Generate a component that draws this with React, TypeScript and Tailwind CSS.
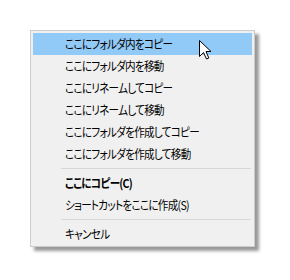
import React from "react";

const font = {
  fontFamily: '"Noto Sans CJK JP", sans-serif',
};

function Item({ label, active, bold }: { label: string; active?: boolean; bold?: boolean }) {
  return (
    <div
      className={
        "h-[22px] flex items-center pl-[32px] text-[12px] text-black leading-none " +
        (active ? "bg-[#91c9f7] " : "") +
        (bold ? "font-bold" : "font-normal")
      }
    >
      <span className="inline-block whitespace-nowrap origin-left scale-x-[0.88] tracking-[-0.8px] [font-feature-settings:'palt']">
        {label}
      </span>
    </div>
  );
}

function Sep() {
  return (
    <div className="h-[7px] flex items-center pl-[28px] pr-[1px]">
      <div className="h-px w-full bg-[#d7d7d7]" />
    </div>
  );
}

export default function App() {
  return (
    <div className="w-[290px] h-[280px] bg-white relative" style={font}>
      <div className="absolute left-[30px] top-[30px] w-[225px] h-[217px] border border-[#cccccc] bg-[#f0f0f0] p-[2px] pb-[1px] shadow-[4px_4px_3px_rgba(0,0,0,0.4)]">
        <Item label="ここにフォルダ内をコピー" active />
        <Item label="ここにフォルダ内を移動" />
        <Item label="ここにリネームしてコピー" />
        <Item label="ここにリネームして移動" />
        <Item label="ここにフォルダを作成してコピー" />
        <Item label="ここにフォルダを作成して移動" />
        <Sep />
        <Item label="ここにコピー(C)" bold />
        <Item label="ショートカットをここに作成(S)" />
        <Sep />
        <Item label="キャンセル" />
      </div>
      <svg
        className="absolute left-[199px] top-[40px]"
        width="13"
        height="20"
        viewBox="0 0 13 20"
      >
        <path
          d="M0.5 0.5 L0.5 16.5 L4.5 12.5 L7.5 19 L9.8 18 L7 11.5 L12 11.5 Z"
          fill="white"
          stroke="black"
          strokeWidth="1"
          strokeLinejoin="miter"
        />
      </svg>
    </div>
  );
}
